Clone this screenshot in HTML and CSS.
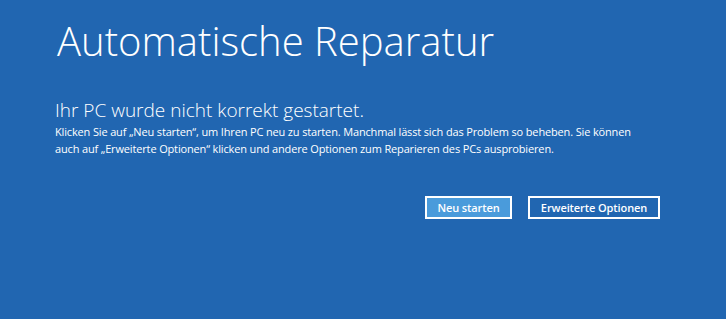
FILE: index.html
```html
<!DOCTYPE html>
<html lang="de">
<head>
  <meta charset="utf-8">
  <title>Automatische Reparatur</title>
  <link rel="stylesheet" href="styles.css">
</head>
<body>
  <div class="screen">
    <h1 class="title">Automatische Reparatur</h1>
    <h2 class="subtitle">Ihr PC wurde nicht korrekt gestartet.</h2>
    <p class="message">Klicken Sie auf „Neu starten“, um Ihren PC neu zu starten. Manchmal lässt sich das Problem so beheben. Sie können auch auf „Erweiterte Optionen“ klicken und andere Optionen zum Reparieren des PCs ausprobieren.</p>
    <div class="actions">
      <button class="btn btn-primary">Neu starten</button>
      <button class="btn">Erweiterte Optionen</button>
    </div>
  </div>
</body>
</html>
```

FILE: styles.css
```css
html, body {
  margin: 0;
  height: 100%;
}
body {
  background-color: #2166b1;
  color: #ffffff;
  font-family: "Open Sans", "Liberation Sans", sans-serif;
}
.screen {
  padding: 13px 0 0 55px;
  width: 605px;
}
.title {
  margin: 0 0 0 2px;
  font-size: 40px;
  font-weight: 300;
  line-height: 56px;
}
.subtitle {
  margin: 28px 0 0 0;
  font-size: 19px;
  font-weight: 300;
  line-height: 26px;
}
.message {
  margin: 0;
  width: 583px;
  font-size: 11px;
  letter-spacing: -0.15px;
  line-height: 17px;
}
.actions {
  display: flex;
  justify-content: flex-end;
  gap: 16px;
  margin-top: 39px;
}
.btn {
  height: 23px;
  padding: 0;
  border: 2px solid #ffffff;
  background-color: #2166b1;
  color: #ffffff;
  font-family: inherit;
  font-size: 11px;
  font-weight: 600;
  letter-spacing: -0.1px;
  white-space: nowrap;
  width: 132px;
}
.btn-primary {
  width: 87px;
  background-color: #4a9bdb;
}
```
